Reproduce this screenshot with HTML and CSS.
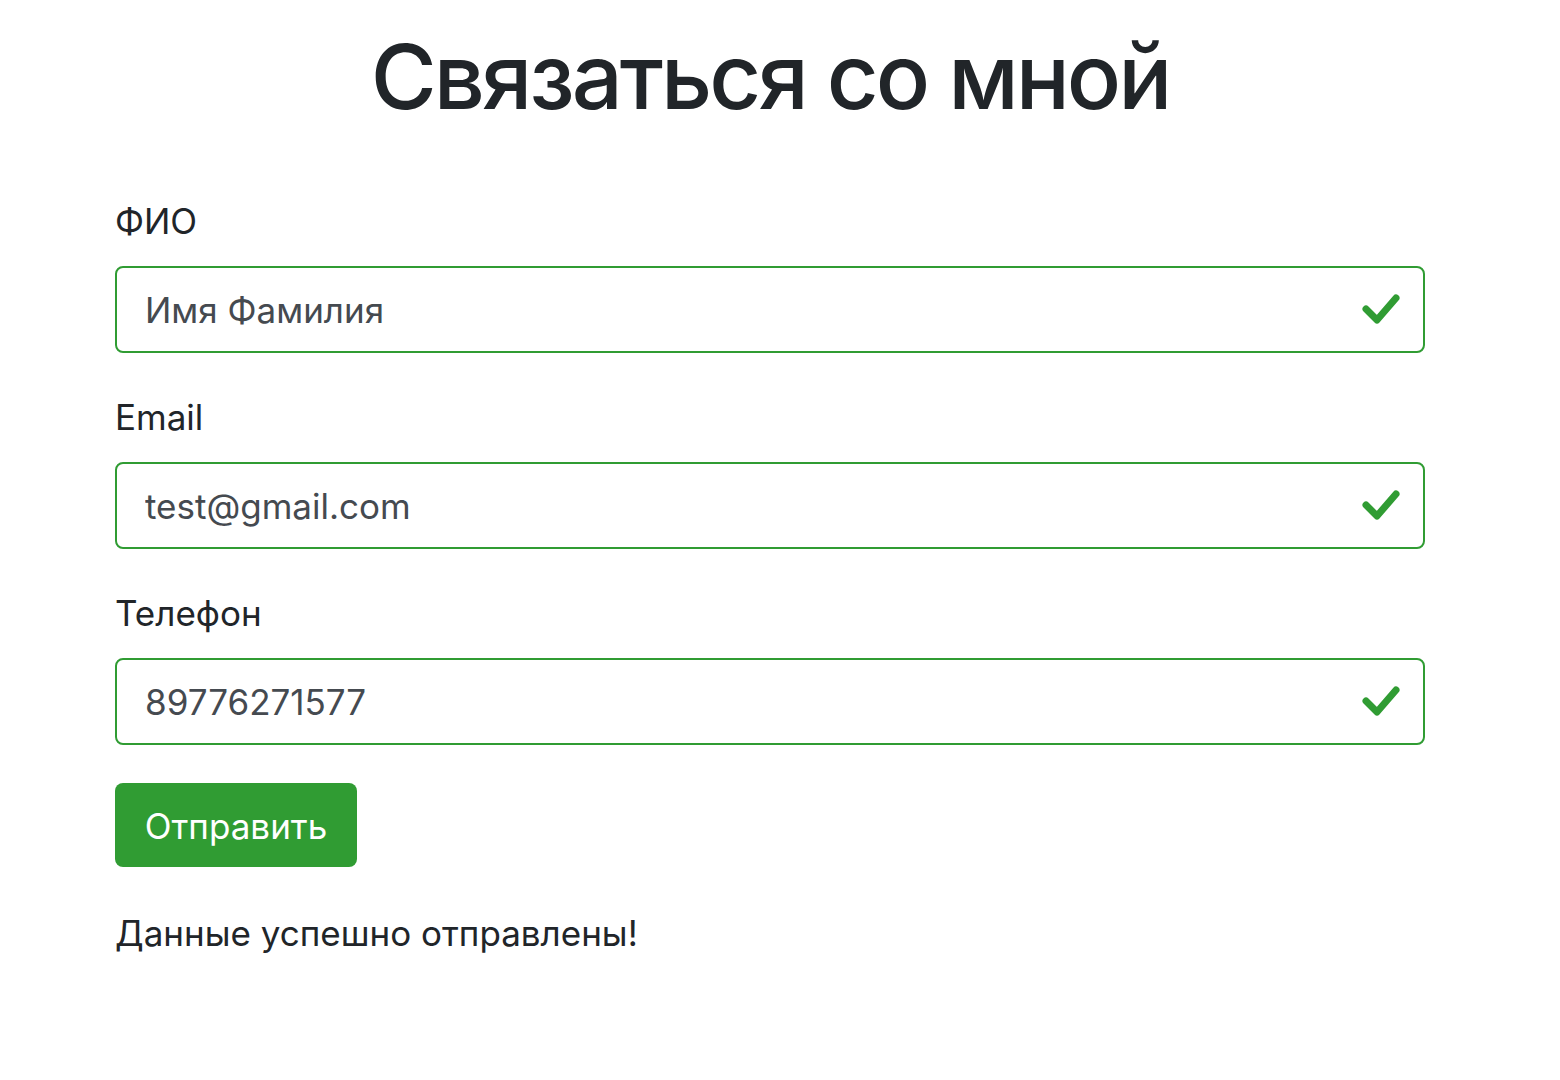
FILE: index.html
```html
<!DOCTYPE html>
<html lang="ru">
<head>
<meta charset="utf-8">
<title>Связаться со мной</title>
<link rel="stylesheet" href="styles.css">
</head>
<body>
<main class="container">
  <h1 class="title">Связаться со мной</h1>
  <form class="form">
    <div class="field">
      <label class="label" for="fio">ФИО</label>
      <div class="control">
        <input class="input" id="fio" type="text" value="Имя Фамилия">
        <svg class="check" viewBox="0 0 40 32" aria-hidden="true"><polyline points="5,15 16,26 35,4" /></svg>
      </div>
    </div>
    <div class="field">
      <label class="label" for="email">Email</label>
      <div class="control">
        <input class="input" id="email" type="text" value="test@gmail.com">
        <svg class="check" viewBox="0 0 40 32" aria-hidden="true"><polyline points="5,15 16,26 35,4" /></svg>
      </div>
    </div>
    <div class="field">
      <label class="label" for="phone">Телефон</label>
      <div class="control">
        <input class="input" id="phone" type="text" value="89776271577">
        <svg class="check" viewBox="0 0 40 32" aria-hidden="true"><polyline points="5,15 16,26 35,4" /></svg>
      </div>
    </div>
    <button class="btn" type="button">Отправить</button>
    <p class="status">Данные успешно отправлены!</p>
  </form>
</main>
</body>
</html>
```
FILE: styles.css
```css
* { box-sizing: border-box; }
html, body { margin: 0; padding: 0; background: #fff; }
body {
  font-family: Inter, "Liberation Sans", Arial, sans-serif;
  color: #212529;
}
.container {
  width: 1310px;
  margin-left: 115px;
  padding-top: 22px;
}
.title {
  margin: 0;
  font-family: Inter, "Liberation Sans", Arial, sans-serif;
  font-weight: 500;
  font-size: 90px;
  letter-spacing: -3px;
  line-height: 109px;
  text-align: center;
  color: #212529;
}
.form {
  margin-top: 64px;
  display: flex;
  flex-direction: column;
  align-items: flex-start;
}
.field {
  width: 100%;
  margin-bottom: 38px;
}
.label {
  display: block;
  font-size: 35px;
  line-height: 52px;
  margin-bottom: 19px;
}
.control {
  position: relative;
  width: 100%;
}
.input {
  display: block;
  width: 100%;
  height: 87px;
  padding: 0 90px 0 28px;
  border: 2px solid #309c33;
  border-radius: 8px;
  font-family: Inter, "Liberation Sans", Arial, sans-serif;
  font-size: 35px;
  color: #454a50;
  background: #fff;
  outline: none;
}
.check {
  position: absolute;
  right: 24px;
  top: 28px;
  width: 40px;
  height: 32px;
}
.check polyline {
  fill: none;
  stroke: #309c33;
  stroke-width: 7;
  stroke-linecap: round;
  stroke-linejoin: round;
}
.btn {
  width: 242px;
  height: 84px;
  padding: 2px 0 0;
  border: none;
  border-radius: 8px;
  background: #309c33;
  color: #fff;
  font-family: Inter, "Liberation Sans", Arial, sans-serif;
  font-size: 35px;
  cursor: pointer;
}
.status {
  margin: 40px 0 0;
  font-size: 35px;
  line-height: 52px;
}
```
